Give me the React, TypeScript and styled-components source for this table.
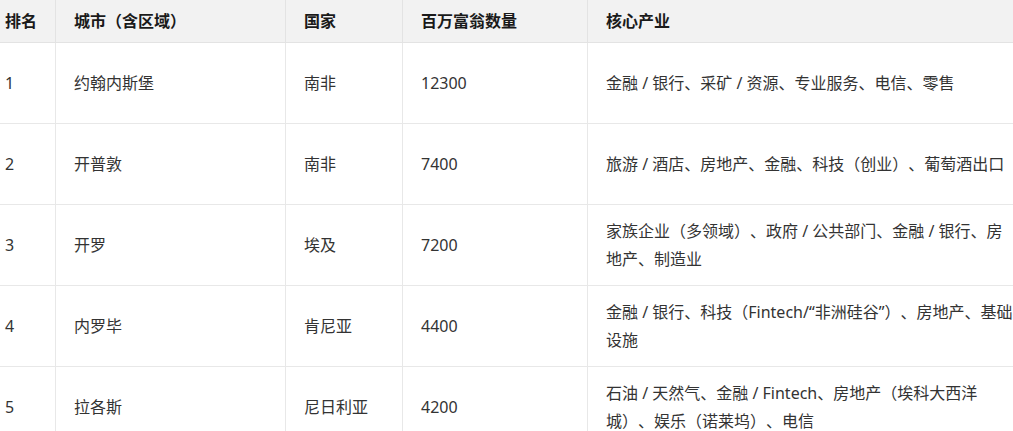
import React from "react";
import styled, { createGlobalStyle } from "styled-components";

const GlobalStyle = createGlobalStyle`
  html, body {
    margin: 0;
    padding: 0;
    background: #ffffff;
    overflow: hidden;
  }
  body {
    font-family: "Noto Sans", "Noto Sans CJK SC", sans-serif;
  }
`;

const Viewport = styled.div`
  width: 1013px;
  height: 431px;
  overflow: hidden;
`;

const Table = styled.table`
  margin-left: -14px;
  width: 1047px;
  table-layout: fixed;
  border-collapse: collapse;
  font-size: 16px;
  line-height: 28px;
  text-spacing-trim: space-all;
`;

const HeadCell = styled.th`
  height: 42px;
  padding: 0 18px;
  background: #f2f2f2;
  color: #1a1a1a;
  font-weight: 700;
  text-align: left;
  white-space: nowrap;
  vertical-align: middle;
  border-bottom: 1px solid #e3e3e3;
  border-left: 1px solid #e3e3e3;
`;

const Cell = styled.td`
  height: 80px;
  padding: 0 18px;
  color: #333333;
  text-align: left;
  vertical-align: middle;
  border-bottom: 1px solid #e8e8e8;
  border-left: 1px solid #e8e8e8;
`;

const columns = [
  { title: "排名", width: 69 },
  { title: "城市（含区域）", width: 230 },
  { title: "国家", width: 117 },
  { title: "百万富翁数量", width: 185 },
  { title: "核心产业", width: 446 },
];

const rows = [
  ["1", "约翰内斯堡", "南非", "12300", "金融 / 银行、采矿 / 资源、专业服务、电信、零售"],
  ["2", "开普敦", "南非", "7400", "旅游 / 酒店、房地产、金融、科技（创业）、葡萄酒出口"],
  ["3", "开罗", "埃及", "7200", "家族企业（多领域）、政府 / 公共部门、金融 / 银行、房地产、制造业"],
  ["4", "内罗毕", "肯尼亚", "4400", "金融 / 银行、科技（Fintech/“非洲硅谷”）、房地产、基础设施"],
  ["5", "拉各斯", "尼日利亚", "4200", "石油 / 天然气、金融 / Fintech、房地产（埃科大西洋城）、娱乐（诺莱坞）、电信"],
];

export default function App() {
  return (
    <>
      <GlobalStyle />
      <Viewport>
        <Table>
          <colgroup>
            {columns.map((c) => (
              <col key={c.title} style={{ width: c.width }} />
            ))}
          </colgroup>
          <thead>
            <tr>
              {columns.map((c) => (
                <HeadCell key={c.title}>{c.title}</HeadCell>
              ))}
            </tr>
          </thead>
          <tbody>
            {rows.map((r) => (
              <tr key={r[0]}>
                {r.map((v, i) => (
                  <Cell key={i}>{v}</Cell>
                ))}
              </tr>
            ))}
          </tbody>
        </Table>
      </Viewport>
    </>
  );
}
